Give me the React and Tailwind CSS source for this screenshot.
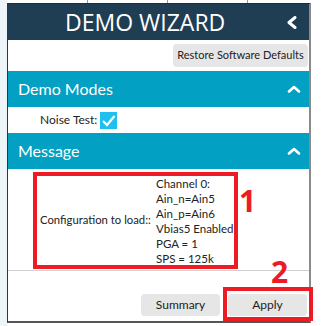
export default function App() {
  const font = { fontFamily: 'Lato, "Open Sans", sans-serif' };
  const titleFont = { fontFamily: '"Open Sans", "Noto Sans", sans-serif' };
  return (
    <div className="relative w-[325px] h-[326px] bg-white flex overflow-hidden" style={font}>
      <div className="w-[7px] h-full bg-[#eef5f8]" />
      <div className="w-[304px] h-[323px] flex flex-col">
        <div className="h-[3px] flex">
          <div className="w-[80px]" />
          <div className="w-[80px] border-l border-[#999]" />
          <div className="w-[80px] border-l border-[#999]" />
          <div className="w-[62px] border-l border-[#999]" />
        </div>
        <div className="flex-1 flex flex-col border-t border-t-[#2a2a2a] border-l border-l-[#333] border-r-2 border-r-[#8a8a8a] border-b-2 border-b-[#555]">
          {/* Header */}
          <div className="h-[36px] bg-[#1f3d53] flex items-center">
            <span className="ml-[57px] text-[23px] leading-none text-white" style={titleFont}>DEMO WIZARD</span>
            <svg className="ml-auto mr-[11px]" width="12" height="13" viewBox="0 0 12 13">
              <polyline points="9,1.5 3,6.5 9,11.5" fill="none" stroke="white" strokeWidth="3" strokeLinecap="round" strokeLinejoin="round" />
            </svg>
          </div>
          {/* Restore row */}
          <div className="h-[31px] flex items-center justify-end pr-[1px]">
            <button className="w-[135px] h-[23px] rounded-[4px] bg-[#e6e6e6] text-[11px] text-[#222] whitespace-nowrap flex items-center justify-center">
              Restore Software Defaults
            </button>
          </div>
          {/* Demo Modes header */}
          <div className="h-[36px] bg-[#02a0c2] flex items-center pl-[10px]">
            <span className="text-[16px] text-white leading-none">Demo Modes</span>
            <svg className="ml-auto mr-[8px]" width="14" height="8" viewBox="0 0 14 8">
              <polyline points="2,6.5 7,2 12,6.5" fill="none" stroke="white" strokeWidth="2.6" strokeLinecap="round" strokeLinejoin="round" />
            </svg>
          </div>
          {/* Noise row */}
          <div className="h-[26px] flex items-center pl-[32px] gap-[3px]">
            <span className="text-[12px] text-[#222]">Noise Test:</span>
            <span className="w-[17px] h-[17px] bg-[#1fbff0] flex items-center justify-center">
              <svg width="15" height="13" viewBox="0 0 15 13">
                <polyline points="2,7 6,11 13.5,2" fill="none" stroke="white" strokeWidth="2.2" />
              </svg>
            </span>
          </div>
          {/* Message header */}
          <div className="h-[36px] bg-[#02a0c2] flex items-center pl-[10px]">
            <span className="text-[16px] text-white leading-none">Message</span>
            <svg className="ml-auto mr-[8px]" width="14" height="8" viewBox="0 0 14 8">
              <polyline points="2,6.5 7,2 12,6.5" fill="none" stroke="white" strokeWidth="2.6" strokeLinecap="round" strokeLinejoin="round" />
            </svg>
          </div>
          {/* Message content */}
          <div className="h-[102px] flex items-start pt-[3px] pl-[25px] border-b border-[#d0d0d0]">
            <div className="w-[205px] h-[97px] shrink-0 border-[4px] border-[#ed1c24] flex items-center pl-[3px] text-[11.5px] text-[#222] overflow-hidden">
              <span className="w-[116px] shrink-0 whitespace-nowrap text-[11.3px]">Configuration to load::</span>
              <div className="flex flex-col leading-[15px] whitespace-nowrap">
                <span>Channel 0:</span>
                <span>Ain_n=Ain5</span>
                <span>Ain_p=Ain6</span>
                <span>Vbias5 Enabled</span>
                <span>PGA = 1</span>
                <span>SPS = 125k</span>
              </div>
            </div>
            <span className="mt-[14px] ml-[1px] text-[30px] font-bold leading-none text-[#ed1c24]" style={titleFont}>1</span>
          </div>
          {/* Bottom buttons */}
          <div className="flex-1 flex items-end justify-end gap-[8px] pb-[5px] pr-[2px]">
            <button className="w-[79px] h-[22px] rounded-[4px] bg-[#e6e6e6] text-[12px] text-[#222] flex items-center justify-center">Summary</button>
            <button className="w-[79px] h-[22px] rounded-[4px] bg-[#e6e6e6] text-[12px] text-[#222] flex items-center justify-center">Apply</button>
          </div>
        </div>
      </div>
      <span className="absolute left-[271px] top-[257px] text-[30px] font-bold leading-none text-[#ed1c24]" style={titleFont}>2</span>
      <div className="absolute left-[223px] top-[287px] w-[90px] h-[34px] border-[4px] border-[#ed1c24]" />
    </div>
  );
}
